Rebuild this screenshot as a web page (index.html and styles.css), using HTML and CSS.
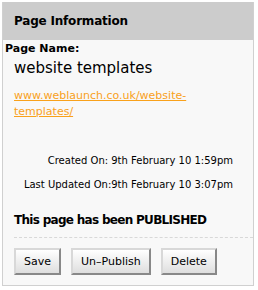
FILE: index.html
```html
<!DOCTYPE html>
<html lang="en">

<head>
    <meta charset="UTF-8">
    <title>Page Information</title>
    <link rel="stylesheet" href="styles.css">
</head>

<body>
    <div class="panel">
        <!--Header------------------------------------------------------------->
        <div class="panel-head">Page Information</div>
        <!--Body--------------------------------------------------------------->
        <div class="panel-body">
            <div class="label">Page Name:</div>
            <div class="page-name">website templates</div>
            <a class="page-url" href="#">www.weblaunch.co.uk/website-<br>templates/</a>

            <div class="dates">
                <div class="date-row">Created On: 9th February 10 1:59pm</div>
                <div class="date-row">Last Updated On:9th February 10 3:07pm</div>
            </div>

            <div class="status">This page has been PUBLISHED</div>
        </div>
        <!--Buttons------------------------------------------------------------>
        <div class="panel-foot">
            <input class="btn" type="button" value="Save" />
            <input class="btn" type="button" value="Un–Publish" />
            <input class="btn" type="button" value="Delete" />
        </div>
    </div>
</body>

</html>
```

FILE: styles.css
```css
body {
    margin: 0;
    padding: 2px 4px 3px 2px;
    background-color: white;
    color: black;
    font-family: "DejaVu Sans", Verdana, sans-serif;
}

.panel {
    border: solid #d0d0d0 1px;
    border-top: none;
    background-color: #f8f8f8;
    height: 284px;
    box-sizing: border-box;
}

.panel-head {
    background-color: #cccccc;
    height: 38px;
    line-height: 38px;
    padding-left: 11px;
    font-size: 12px;
    font-weight: bold;
    letter-spacing: -0.2px;
}

.panel-body {
    padding: 2px 0 0 2px;
}

.label {
    font-size: 11px;
    font-weight: bold;
    line-height: 14px;
}

.page-name {
    margin-top: 2px;
    font-size: 15px;
    padding-left: 9px;
    line-height: 20px;
}

.page-url {
    display: block;
    margin: 10px 0 0 9px;
    font-size: 11px;
    line-height: 16px;
    color: #f9a11b;
}

.dates {
    margin-top: 29px;
    padding-right: 20px;
    text-align: right;
    font-size: 10px;
}

.date-row {
    line-height: 24px;
}

.status {
    margin: 16px 0 0 9px;
    font-size: 12px;
    font-weight: bold;
    letter-spacing: -0.7px;
    padding-bottom: 10px;
    border-bottom: dashed #d8d8d8 1px;
}

.panel-foot {
    display: flex;
    gap: 10px;
    padding: 10px 0 0 11px;
}

.btn {
    font-family: "DejaVu Sans", Verdana, sans-serif;
    font-size: 11px;
    height: 27px;
    padding: 0 8px;
    border: solid 2px;
    border-color: #d8d8d8 #888888 #888888 #d8d8d8;
    background: linear-gradient(#ffffff, #dedede);
    color: black;
}
```
